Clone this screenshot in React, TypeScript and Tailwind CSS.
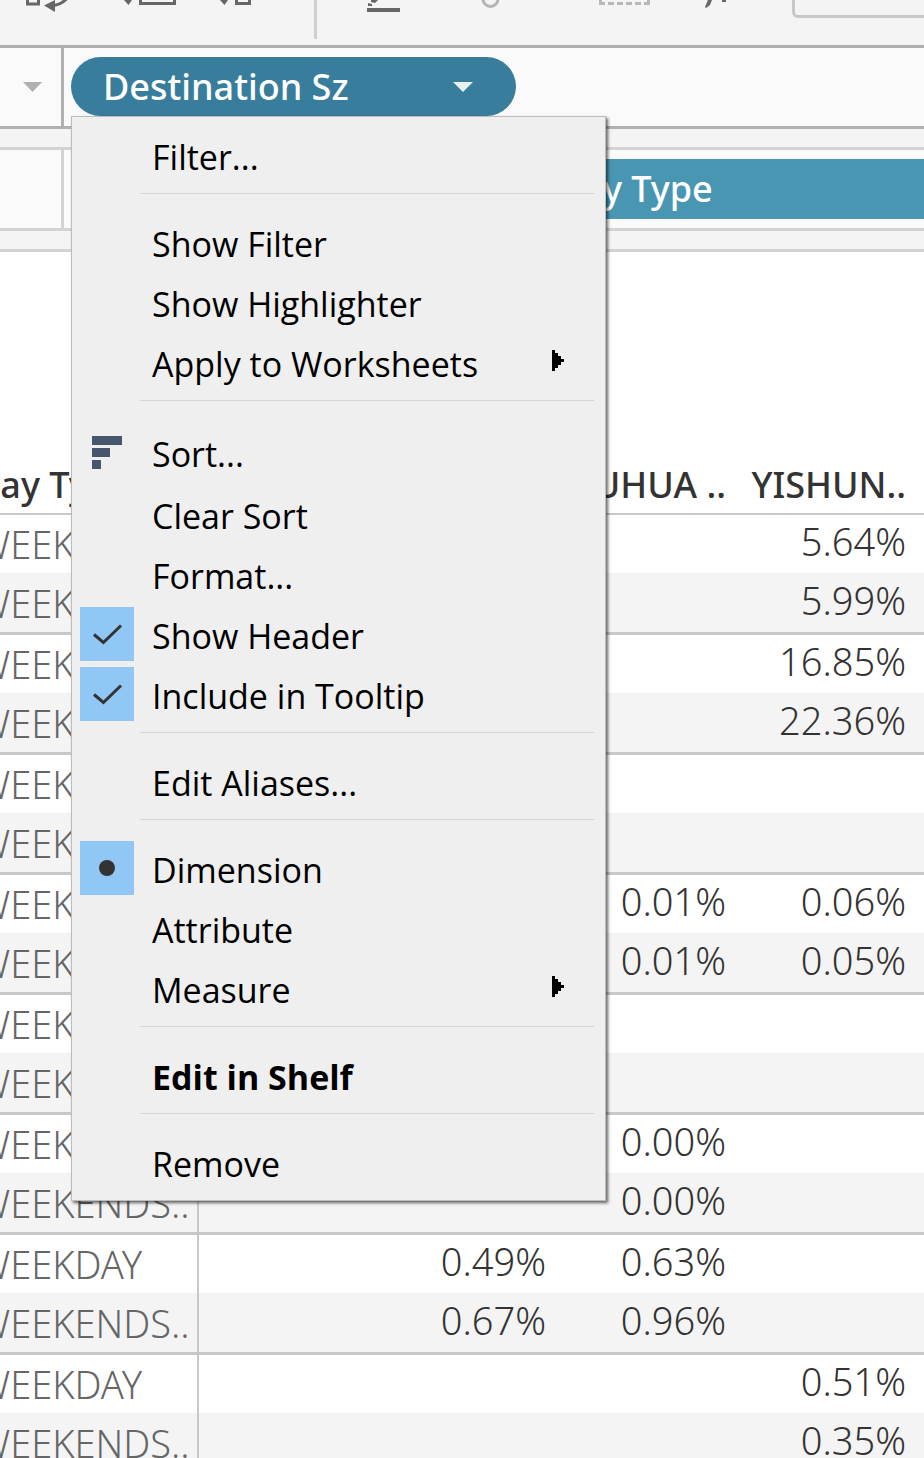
import React from "react";

type Item = {
  label: string;
  mark?: "check" | "dot" | "sort";
  submenu?: boolean;
  bold?: boolean;
};

const menuGroups: Item[][] = [
  [{ label: "Filter..." }],
  [
    { label: "Show Filter" },
    { label: "Show Highlighter" },
    { label: "Apply to Worksheets", submenu: true },
  ],
  [
    { label: "Sort...", mark: "sort" },
    { label: "Clear Sort" },
    { label: "Format..." },
    { label: "Show Header", mark: "check" },
    { label: "Include in Tooltip", mark: "check" },
  ],
  [{ label: "Edit Aliases..." }],
  [
    { label: "Dimension", mark: "dot" },
    { label: "Attribute" },
    { label: "Measure", submenu: true },
  ],
  [{ label: "Edit in Shelf", bold: true }],
  [{ label: "Remove" }],
];

const values: string[][] = [
  ["", "", "", "5.64%"],
  ["", "", "", "5.99%"],
  ["", "", "", "16.85%"],
  ["", "", "", "22.36%"],
  ["", "", "", ""],
  ["", "", "", ""],
  ["", "", "0.01%", "0.06%"],
  ["", "", "0.01%", "0.05%"],
  ["", "", "", ""],
  ["", "", "", ""],
  ["", "", "0.00%", ""],
  ["", "", "0.00%", ""],
  ["", "0.49%", "0.63%", ""],
  ["", "0.67%", "0.96%", ""],
  ["", "", "", "0.51%"],
  ["", "", "", "0.35%"],
];

function Mark({ kind }: { kind?: Item["mark"] }) {
  if (kind === "sort") {
    return (
      <svg className="h-[54px] w-[54px] shrink-0" viewBox="0 0 54 54" fill="#47566d" aria-hidden="true">
        <path d="M12 11h30v9H12zM12 23h18v9H12zM12 35h9v9h-9z" />
      </svg>
    );
  }
  if (kind === "check") {
    return (
      <svg className="h-[54px] w-[54px] shrink-0 bg-[#91c7f5]" viewBox="0 0 54 54" fill="none" aria-hidden="true">
        <path d="M14 27.5l9.4 8L41 18.5" stroke="#333" strokeWidth="3" />
      </svg>
    );
  }
  if (kind === "dot") {
    return (
      <svg className="h-[54px] w-[54px] shrink-0 bg-[#91c7f5]" viewBox="0 0 54 54" aria-hidden="true">
        <circle cx="27" cy="27" r="8" fill="#333" />
      </svg>
    );
  }
  return <span className="w-[54px] shrink-0" />;
}

function MenuItem({ item }: { item: Item }) {
  return (
    <button
      type="button"
      role="menuitem"
      className={`flex w-full items-center pr-[41px] pl-2 text-left text-black ${
        item.mark === "sort" ? "h-[65px]" : "h-[60px]"
      }`}
    >
      <Mark kind={item.mark} />
      <span
        className={`grow pt-1 pl-[18px] text-[34px] leading-[48px] whitespace-nowrap ${item.bold ? "font-bold" : ""}`}
      >
        {item.label}
      </span>
      {item.submenu && (
        <svg className="mb-[3px] h-[21px] w-3 shrink-0" viewBox="0 0 12 21" shapeRendering="crispEdges" aria-hidden="true">
          <path d="M0 0h3v3h3v3h3v3h3v3h-3v3H6v3H3v3H0z" />
        </svg>
      )}
    </button>
  );
}

function ContextMenu() {
  return (
    <div
      role="menu"
      aria-label="Destination Sz"
      className="absolute top-full left-0 z-10 w-[535px] border border-[#bdbdbd] bg-[#efefef] py-2 font-['Open_Sans',sans-serif] shadow-[2px_2px_3px_rgba(0,0,0,0.6)]"
    >
      {menuGroups.map((group, i) => (
        <React.Fragment key={i}>
          {i > 0 && <div role="separator" className="mt-2 mr-[11px] mb-[18px] ml-[68px] h-px bg-[#d5d5d5]" />}
          {group.map((item) => (
            <MenuItem key={item.label} item={item} />
          ))}
        </React.Fragment>
      ))}
    </div>
  );
}

function Toolbar() {
  return (
    <div className="flex h-12 items-start border-b-[3px] border-[#b0b0b0] bg-[#f4f4f4]">
      <button type="button" aria-label="Swap rows and columns" className="ml-6">
        <svg className="h-4 w-11" viewBox="0 0 44 16" fill="none" stroke="#666">
          <path d="M3.500 0v4h11V0" strokeWidth="3" />
          <path d="M28 5.500c6 0 10-2 15-7" strokeWidth="3" />
          <path d="M20 5.500L31 0v12z" fill="#666" stroke="none" />
        </svg>
      </button>
      <button type="button" aria-label="Sort ascending" className="ml-14">
        <svg className="h-4 w-14" viewBox="0 0 56 16" fill="none">
          <path d="M0 0h8L4.500 5z" fill="#666" />
          <path d="M16.500 0v3.500h34V0" stroke="#666" strokeWidth="3" />
        </svg>
      </button>
      <button type="button" aria-label="Sort descending" className="ml-10">
        <svg className="h-4 w-9" viewBox="0 0 36 16" fill="none">
          <path d="M0 0h8L4.500 5z" fill="#666" />
          <path d="M16.500 0v3.500h13V0" stroke="#666" strokeWidth="3" />
        </svg>
      </button>
      <div className="ml-[58px] h-[39px] w-[3px] bg-[#d0d0d0]" />
      <button type="button" aria-label="Highlight" className="ml-[50px]">
        <svg className="h-4 w-[33px]" viewBox="0 0 33 16" fill="#666">
          <path d="M0 8h33v4H0z" />
          <path d="M4 0h7L8 3 4 2zM1 3l4 1v2H1z" />
        </svg>
      </button>
      <button type="button" aria-label="Group members" className="ml-20">
        <svg className="h-4 w-5" viewBox="0 0 20 16" fill="none">
          <circle cx="10.500" cy="-1" r="7.500" stroke="#b4b4b4" strokeWidth="3" />
        </svg>
      </button>
      <button type="button" aria-label="Show mark labels" className="ml-[99px]">
        <svg className="h-4 w-[51px]" viewBox="0 0 51 16" fill="none" stroke="#b8b8b8" strokeWidth="3">
          <path d="M1.500 0v3.500M49.500 0v3.500M0 3.500h6M9 3.500h6M18 3.500h6M27 3.500h6M36 3.500h6M45 3.500h6" />
        </svg>
      </button>
      <button type="button" aria-label="Fix axes" className="ml-[54px]">
        <svg className="h-4 w-6" viewBox="0 0 24 16" fill="#666">
          <path d="M4 0h4L6 5 2 8l-1-1zM18 0h4v2h-4z" />
        </svg>
      </button>
      <input
        aria-label="Fit"
        readOnly
        className="ml-16 -mt-8 h-[50px] w-0 grow rounded-l-md border-[3px] border-r-0 border-[#c8c8c8] bg-[#f4f4f4]"
      />
    </div>
  );
}

export default function App() {
  return (
    <main className="h-screen overflow-hidden bg-white font-['Noto_Sans',sans-serif]">
      <Toolbar />

      <section className="flex h-[81px] border-b-[3px] border-[#b0b0b0] bg-[#fafafa]">
        <div className="flex w-16 items-center justify-end border-r-[3px] border-[#b0b0b0] pr-[19px]">
          <svg className="h-[10px] w-[19px]" viewBox="0 0 19 10" fill="#b0b0b0" aria-hidden="true">
            <path d="M0 0h19L9.500 10z" />
          </svg>
        </div>
        <div className="relative mt-[9px] ml-[7px] h-[59px] w-[445px]">
          <button
            type="button"
            aria-haspopup="menu"
            aria-expanded="true"
            className="flex h-full w-full items-center justify-between rounded-full bg-[#387e9c] pr-[43px] pl-8 text-[36px] font-medium text-white"
          >
            Destination Sz
            <svg className="h-[10px] w-5" viewBox="0 0 20 10" fill="#e8f1f5" aria-hidden="true">
              <path d="M0 0h20L10 10z" />
            </svg>
          </button>
          <ContextMenu />
        </div>
      </section>

      <div className="h-[21px] border-b-[3px] border-[#d3d3d3] bg-[#f4f4f4]" />

      <section className="flex h-[81px] border-b-[3px] border-[#d3d3d3] bg-[#fafafa]">
        <div className="w-16 border-r-[3px] border-[#d3d3d3]" />
        <div className="flex grow py-[9px] pl-[460px]">
          <button
            type="button"
            className="flex grow items-center rounded-l-full bg-[#4996b2] pl-8 text-[36px] font-medium text-white"
          >
            Day Type
          </button>
        </div>
      </section>

      <div className="h-[21px] border-b-[3px] border-[#d3d3d3] bg-[#f4f4f4]" />

      <table className="w-full table-fixed border-separate border-spacing-0 text-[38px] leading-[48px] whitespace-nowrap">
        <colgroup>
          <col className="w-[199px]" />
          <col className="w-[180px]" />
          <col className="w-[180px]" />
          <col className="w-[180px]" />
          <col className="w-[180px]" />
          <col />
        </colgroup>
        <thead>
          <tr className="h-[263px] align-bottom text-[36px] text-[#333]">
            <th scope="col" className="border-b-2 border-[#c8c8c8] p-0 pb-1 text-left font-medium">
              <span className="-ml-[26px]">Day Type</span>
            </th>
            <th className="border-b-2 border-[#c8c8c8]" />
            <th className="border-b-2 border-[#c8c8c8]" />
            <th scope="col" className="border-b-2 border-[#c8c8c8] p-0 pr-[13px] pb-1 text-right font-medium">
              YUHUA ..
            </th>
            <th scope="col" className="border-b-2 border-[#c8c8c8] p-0 pr-[13px] pb-1 text-right font-medium">
              YISHUN..
            </th>
            <th className="border-b-2 border-[#c8c8c8]" />
          </tr>
        </thead>
        <tbody>
          {values.map((row, i) => {
            const last = i % 2 === 1;
            const line = last ? "border-b-[3px] border-b-[#c8c8c8]" : "";
            return (
              <tr key={i} className={last ? "h-[62px] bg-[#f4f4f4]" : "h-[58px] bg-white"}>
                <th
                  scope="row"
                  className={`border-r-2 border-r-[#c8c8c8] p-0 text-left font-light text-[#666] ${line}`}
                >
                  <span className="-ml-[24px]">{last ? "WEEKENDS.." : "WEEKDAY"}</span>
                </th>
                {row.map((v, j) => (
                  <td key={j} className={`p-0 pr-[13px] pb-1.5 text-right font-light text-[#333] ${line}`}>
                    {v}
                  </td>
                ))}
                <td className={`p-0 ${line}`} />
              </tr>
            );
          })}
        </tbody>
      </table>
    </main>
  );
}
